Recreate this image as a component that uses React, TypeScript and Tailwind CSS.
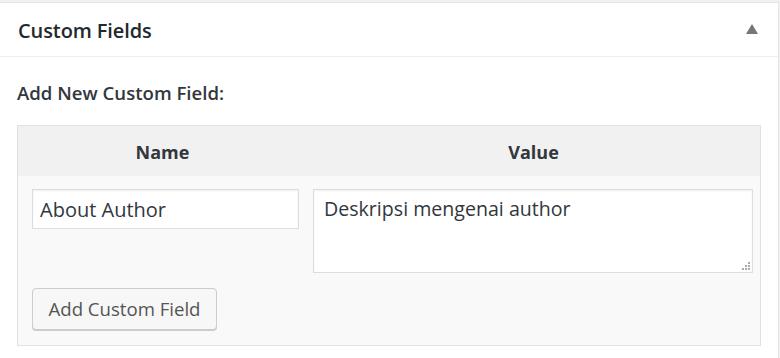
import React from "react";

export default function App() {
  const font = { fontFamily: '"Open Sans", "Noto Sans", sans-serif' };
  return (
    <div className="w-[780px] h-[358px] bg-[#f1f1f1] pt-[2px] pr-[1px] overflow-hidden" style={font}>
      <div className="h-[400px] bg-white border-t border-r border-[#e5e5e5] -ml-[1px] border-l">
        <div className="h-[54px] flex items-center justify-between pl-[18px] pr-[20px] border-b border-[#eee]">
          <h2 className="text-[20px] font-semibold text-[#23282d] tracking-[-0.1px] pt-[2px]">Custom Fields</h2>
          <svg width="12" height="10" viewBox="0 0 12 10" className="mb-[2px]">
            <polygon points="6,0 12,10 0,10" fill="#72777c" />
          </svg>
        </div>
        <div className="pl-[17px] pr-[17px] pt-[24px]">
          <div className="text-[18.6px] font-semibold text-[#32373c] leading-[24px] h-[44px]">Add New Custom Field:</div>
          <div className="border border-[#e1e1e1] bg-[#f9f9f9] h-[221px]">
            <div className="flex h-[50px] bg-[#f1f1f1] items-center text-[18px] font-bold text-[#32373c] pt-[2px]">
              <div className="w-[287px] text-center pl-[2px]">Name</div>
              <div className="flex-1 text-center pl-[2px]">Value</div>
            </div>
            <div className="flex pt-[13px]">
              <div className="w-[295px] pl-[14px]">
                <div className="w-[267px] h-[40px] border border-[#ddd] bg-white shadow-[inset_0_1px_2px_rgba(0,0,0,0.07)] flex items-center pl-[7px] pt-[2px] text-[20px] text-[#32373c]">
                  About Author
                </div>
              </div>
              <div className="flex-1 pr-[7px]">
                <div className="relative h-[84px] border border-[#ddd] bg-white shadow-[inset_0_1px_2px_rgba(0,0,0,0.07)] pl-[10px] pt-[6px] text-[19.6px] text-[#32373c] leading-[26px]">
                  Deskripsi mengenai author
                  <svg width="8" height="8" viewBox="0 0 8 8" className="absolute right-[2px] bottom-[2px]">
                    <rect x="6" y="0" width="2" height="2" fill="#aaa" />
                    <rect x="3" y="3" width="2" height="2" fill="#aaa" />
                    <rect x="6" y="3" width="2" height="2" fill="#aaa" />
                    <rect x="0" y="6" width="2" height="2" fill="#aaa" />
                    <rect x="3" y="6" width="2" height="2" fill="#aaa" />
                    <rect x="6" y="6" width="2" height="2" fill="#aaa" />
                  </svg>
                </div>
              </div>
            </div>
            <div className="pl-[14px] pt-[15px]">
              <button className="w-[185px] h-[42px] border border-[#ccc] rounded-[4px] bg-[#f7f7f7] shadow-[0_1px_0_#ccc] text-[18.6px] text-[#555] flex items-center justify-center">
                Add Custom Field
              </button>
            </div>
          </div>
        </div>
      </div>
    </div>
  );
}
